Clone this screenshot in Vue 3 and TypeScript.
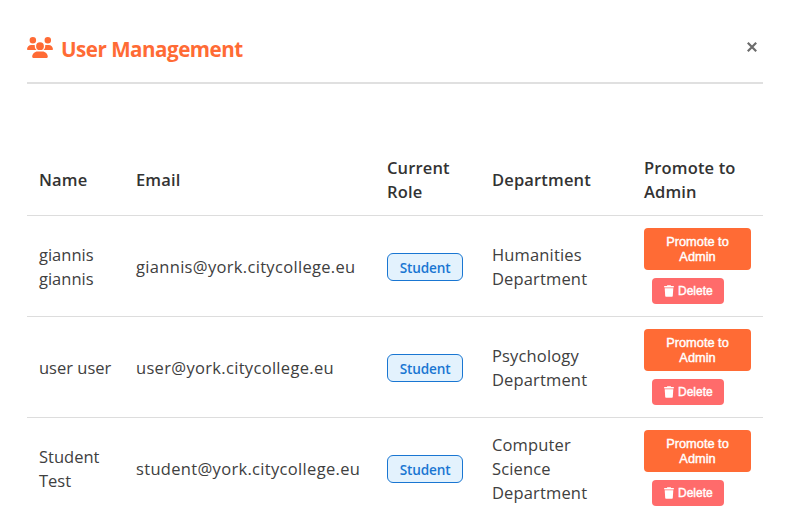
<script setup lang="ts">
interface User {
  name: string
  email: string
  role: string
  department: string
}

const users: User[] = [
  { name: 'giannis giannis', email: 'giannis@york.citycollege.eu', role: 'Student', department: 'Humanities Department' },
  { name: 'user user', email: 'user@york.citycollege.eu', role: 'Student', department: 'Psychology Department' },
  { name: 'Student Test', email: 'student@york.citycollege.eu', role: 'Student', department: 'Computer Science Department' },
]
</script>

<template>
  <main class="panel">
    <header class="panel-header">
      <h2 class="title">
        <svg class="users-icon" viewBox="0 0 640 512" fill="currentColor" aria-hidden="true">
          <path d="M144 0a80 80 0 1 1 0 160A80 80 0 1 1 144 0zM512 0a80 80 0 1 1 0 160A80 80 0 1 1 512 0zM0 298.7C0 239.8 47.8 192 106.7 192h42.7c15.9 0 31 3.5 44.6 9.7c-1.3 7.2-1.9 14.7-1.9 22.3c0 38.2 16.8 72.5 43.3 96c-.2 0-.4 0-.7 0H21.3C9.6 320 0 310.4 0 298.7zM405.3 320c-.2 0-.4 0-.7 0c26.6-23.5 43.3-57.8 43.3-96c0-7.6-.7-15-1.9-22.3c13.6-6.3 28.7-9.7 44.6-9.7h42.7C592.2 192 640 239.8 640 298.7c0 11.8-9.6 21.3-21.3 21.3H405.3zM224 224a96 96 0 1 1 192 0 96 96 0 1 1 -192 0zM128 485.3C128 411.7 187.7 352 261.3 352H378.7C452.3 352 512 411.7 512 485.3c0 14.7-11.9 26.7-26.7 26.7H154.7c-14.7 0-26.7-11.9-26.7-26.7z" />
        </svg>
        <span>User Management</span>
      </h2>
      <button class="close" type="button">
        <svg viewBox="0 0 10 10" fill="none" stroke="currentColor" stroke-width="2.2" aria-hidden="true">
          <path d="M.8.8l8.4 8.4M9.2.8L.8 9.2" />
        </svg>
      </button>
    </header>

    <table class="users">
      <colgroup>
        <col class="col-name" />
        <col class="col-email" />
        <col class="col-role" />
        <col class="col-department" />
        <col class="col-actions" />
      </colgroup>
      <thead>
        <tr>
          <th>Name</th>
          <th>Email</th>
          <th>Current<br />Role</th>
          <th>Department</th>
          <th>Promote to<br />Admin</th>
        </tr>
      </thead>
      <tbody>
        <tr v-for="user in users" :key="user.email">
          <td>{{ user.name }}</td>
          <td class="email">{{ user.email }}</td>
          <td><span class="badge">{{ user.role }}</span></td>
          <td class="department">{{ user.department }}</td>
          <td class="actions-cell">
            <div class="actions">
              <button class="promote" type="button">Promote to<br />Admin</button>
              <button class="delete" type="button">
                <svg viewBox="0 0 448 512" fill="currentColor" aria-hidden="true">
                  <path d="M135.2 17.7L128 32H32C14.3 32 0 46.3 0 64S14.3 96 32 96H416c17.7 0 32-14.3 32-32s-14.3-32-32-32H320l-7.2-14.3C307.4 6.8 296.3 0 284.2 0H163.8c-12.1 0-23.2 6.8-28.6 17.7zM416 128H32L53.2 467c1.6 25.3 22.6 45 47.9 45H346.9c25.3 0 46.3-19.7 47.9-45L416 128z" />
                </svg>
                <span>Delete</span>
              </button>
            </div>
          </td>
        </tr>
      </tbody>
    </table>
  </main>
</template>

<style>
body {
  background: #fff;
  overflow: hidden;
}
</style>

<style scoped>
.panel {
  box-sizing: border-box;
  width: 791px;
  height: 518px;
  overflow: hidden;
  padding: 0 28px 0 27px;
  font-family: 'Segoe UI', 'Open Sans', 'Noto Sans', sans-serif;
  font-size: 16.5px;
  line-height: 24px;
  color: #333;
}
.panel-header {
  box-sizing: border-box;
  display: flex;
  align-items: center;
  justify-content: space-between;
  height: 84px;
  padding: 18px 6px 2px 0;
  border-bottom: 2px solid #e0e0e0;
}
.title {
  display: flex;
  align-items: center;
  gap: 8px;
  margin: 0;
  color: #ff6b35;
  font-size: 20.6px;
  font-weight: 700;
  letter-spacing: -0.5px;
  line-height: 30px;
}
.users-icon {
  width: 26px;
  height: 21px;
  margin-bottom: 4px;
}
.close {
  display: flex;
  margin-bottom: 4px;
  padding: 0;
  border: 0;
  background: none;
  color: #6c6c6c;
}
.close svg {
  width: 10px;
  height: 10px;
}
.users {
  width: 736px;
  margin-top: 59px;
  table-layout: fixed;
  border-collapse: separate;
  border-spacing: 0;
}
.col-name { width: 97px; }
.col-email { width: 251px; }
.col-role { width: 105px; }
.col-department { width: 152px; }
.col-actions { width: 131px; }
th,
td {
  padding: 13px 12px 11px;
  border-bottom: 1px solid #ddd;
  text-align: left;
  vertical-align: middle;
}
th {
  font-weight: 600;
  letter-spacing: 0.15px;
}
td {
  height: 76px;
  color: #404040;
}
.email {
  letter-spacing: 0.32px;
  white-space: nowrap;
}
.department {
  letter-spacing: 0.15px;
}
.actions-cell {
  padding: 12px;
}
.badge {
  box-sizing: border-box;
  display: block;
  width: 76px;
  height: 28px;
  border: 1px solid #1976d2;
  border-radius: 6px;
  background: #e3f2fd;
  color: #1976d2;
  font-size: 13.6px;
  font-weight: 600;
  letter-spacing: -0.15px;
  line-height: 28px;
  text-align: center;
}
.actions {
  display: flex;
  flex-direction: column;
  align-items: flex-start;
  gap: 8px;
}
.promote,
.delete {
  border: 0;
  border-radius: 4px;
  color: #fff;
  font-family: Arial, 'Liberation Sans', sans-serif;
  -webkit-text-stroke: 0.4px currentColor;
}
.promote {
  width: 107px;
  height: 42px;
  padding: 6px 12px;
  background: #ff6b35;
  font-size: 12.8px;
  line-height: 15px;
}
.delete {
  display: flex;
  align-items: center;
  gap: 4px;
  width: 72px;
  height: 26px;
  margin-left: 8px;
  padding: 0 11px 0 12px;
  background: #ff6b6b;
  font-size: 12px;
  line-height: 14px;
}
.delete svg {
  flex: none;
  width: 10px;
  height: 12px;
}
</style>
